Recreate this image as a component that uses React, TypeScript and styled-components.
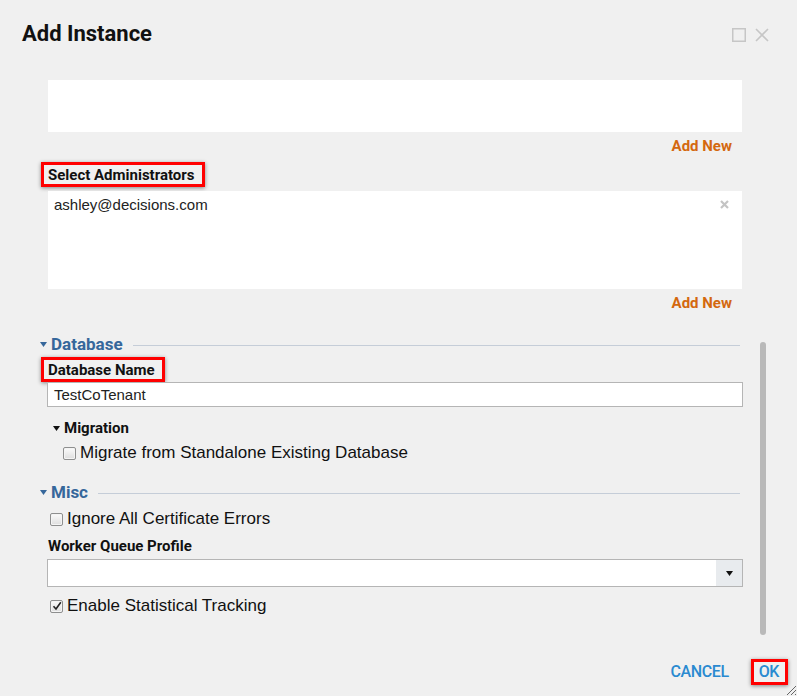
import React from "react";
import styled, { createGlobalStyle, css } from "styled-components";

const GlobalStyle = createGlobalStyle`
  html, body {
    margin: 0;
    padding: 0;
    background: #f0f0f0;
  }
  * { box-sizing: border-box; }
`;

const Dialog = styled.div`
  position: relative;
  width: 797px;
  height: 696px;
  background: #f0f0f0;
  display: flex;
  flex-direction: column;
  overflow: hidden;
`;

const Header = styled.div`
  height: 80px;
  flex: none;
  display: flex;
  align-items: flex-start;
  padding: 21px 28px 0 22px;
`;

const Title = styled.h1`
  margin: 0;
  font-family: Roboto, "Liberation Sans", sans-serif;
  font-weight: 700;
  font-size: 22px;
  line-height: 26px;
  color: #111;
`;

const WindowIcons = styled.div`
  margin-left: auto;
  margin-top: 7px;
  display: flex;
  gap: 9px;
`;

const Main = styled.div`
  flex: 1;
  display: flex;
  padding-left: 40px;
  min-height: 0;
`;

const Form = styled.div`
  width: 703px;
  display: flex;
  flex-direction: column;
`;

const Track = styled.div`
  width: 6px;
  margin-left: 17px;
  padding-top: 262px;
`;

const Thumb = styled.div`
  width: 6px;
  height: 293px;
  border-radius: 3px;
  background: #b9b9b9;
`;

const WhiteBox = styled.div<{ $h: number; $mt?: number }>`
  position: relative;
  margin-left: 8px;
  margin-top: ${(p) => p.$mt ?? 0}px;
  width: 694px;
  height: ${(p) => p.$h}px;
  background: #fff;
  padding: 5px 6px;
  font-family: "Liberation Sans", Arial, sans-serif;
  font-size: 15px;
  line-height: 17px;
  color: #222;
`;

const RemoveX = styled.span`
  position: absolute;
  right: 13px;
  top: 9px;
  display: flex;
`;

const AddNew = styled.div<{ $mt: number }>`
  margin-top: ${(p) => p.$mt}px;
  padding-right: 11px;
  text-align: right;
  font-family: Roboto, "Liberation Sans", sans-serif;
  font-weight: 700;
  font-size: 15px;
  line-height: 20px;
  color: #d4680f;
`;

const Label = styled.div<{ $mt: number; $highlight?: boolean }>`
  align-self: flex-start;
  margin-top: ${(p) => p.$mt}px;
  font-family: Roboto, "Liberation Sans", sans-serif;
  font-weight: 700;
  font-size: 15px;
  line-height: 19px;
  color: #111;
  margin-left: 8px;
  ${(p) =>
    p.$highlight &&
    css`
      margin-left: 1px;
      border: 3px solid #f00;
      padding: 2px 7px 0 4px;
      line-height: 17px;
      box-shadow: 0 1px 4px rgba(0, 0, 0, 0.45);
    `}
`;

const SectionHeader = styled.div<{ $mt: number }>`
  margin-top: ${(p) => p.$mt}px;
  display: flex;
  align-items: center;
  padding-right: 3px;
  font-family: Roboto, "Liberation Sans", sans-serif;
  font-weight: 700;
  font-size: 17px;
  line-height: 20px;
  color: #36679b;
`;

const SectionTitle = styled.span`
  margin-left: 4px;
  margin-right: 10px;
`;

const Rule = styled.span`
  flex: 1;
  height: 1px;
  background: #c5cdd8;
  margin-top: 2px;
`;

const TextInput = styled.div`
  margin-left: 7px;
  width: 696px;
  height: 25px;
  border: 1px solid #b5b5b5;
  background: #fff;
  padding: 1px 6px 0;
  font-family: "Liberation Sans", Arial, sans-serif;
  font-size: 15px;
  line-height: 22px;
  color: #222;
`;

const SubHeader = styled.div`
  margin-top: 12px;
  margin-left: 13px;
  display: flex;
  align-items: center;
  gap: 4px;
  font-family: Roboto, "Liberation Sans", sans-serif;
  font-weight: 700;
  font-size: 15px;
  line-height: 18px;
  color: #111;
`;

const CheckRow = styled.div<{ $mt: number; $ml: number }>`
  margin-top: ${(p) => p.$mt}px;
  margin-left: ${(p) => p.$ml}px;
  display: flex;
  align-items: center;
  gap: 4px;
  font-family: "Liberation Sans", Arial, sans-serif;
  font-size: 17px;
  line-height: 18px;
  color: #111;
`;

const Box = styled.span`
  width: 13px;
  height: 13px;
  flex: none;
  border: 1px solid #8e8f8f;
  border-radius: 2px;
  background: linear-gradient(#fbfbfb, #dedede);
  box-shadow: inset 0 0 0 1px #f4f4f4;
  display: flex;
  align-items: center;
  justify-content: center;
`;

const Select = styled.div`
  margin-top: 3px;
  margin-left: 7px;
  width: 696px;
  height: 28px;
  border: 1px solid #b5b5b5;
  background: #fff;
  display: flex;
  justify-content: flex-end;
`;

const SelectArrow = styled.span`
  width: 26px;
  background: #e8ebee;
  display: flex;
  align-items: center;
  justify-content: center;
`;

const Footer = styled.div`
  height: 56px;
  flex: none;
  display: flex;
  align-items: center;
  justify-content: flex-end;
  gap: 22px;
  padding: 8px 9px 0 0;
`;

const FooterButton = styled.button<{ $highlight?: boolean }>`
  border: none;
  background: none;
  padding: 0;
  font-family: Roboto, "Liberation Sans", sans-serif;
  font-weight: 500;
  font-size: 16px;
  letter-spacing: -0.4px;
  line-height: 20px;
  color: #2a8ad0;
  cursor: pointer;
  ${(p) =>
    p.$highlight &&
    css`
      border: 3px solid #f00;
      padding: 0 6px 0 5px;
      box-shadow: 0 1px 4px rgba(0, 0, 0, 0.45);
    `}
`;

const Grip = styled.span`
  position: absolute;
  right: 0;
  bottom: 0;
  display: flex;
`;

const Caret = ({ color = "#36679b", w = 7, h = 5 }: { color?: string; w?: number; h?: number }) => (
  <svg width={w} height={h} viewBox="0 0 7 5">
    <polygon points="0,0 7,0 3.5,5" fill={color} />
  </svg>
);

const Checkbox = ({ checked }: { checked?: boolean }) => (
  <Box>
    {checked && (
      <svg width="10" height="10" viewBox="0 0 10 10">
        <path d="M1.5 5.2 L4 8 L8.8 1.2" fill="none" stroke="#222" strokeWidth="1.6" />
      </svg>
    )}
  </Box>
);

export default function App() {
  return (
    <>
      <GlobalStyle />
      <Dialog>
        <Header>
          <Title>Add Instance</Title>
          <WindowIcons>
            <svg width="14" height="14" viewBox="0 0 14 14">
              <rect x="0.75" y="0.75" width="12.5" height="12.5" fill="none" stroke="#c6c6c6" strokeWidth="1.5" />
            </svg>
            <svg width="14" height="14" viewBox="0 0 14 14">
              <path d="M1 1 L13 13 M13 1 L1 13" stroke="#c6c6c6" strokeWidth="1.6" />
            </svg>
          </WindowIcons>
        </Header>

        <Main>
          <Form>
            <WhiteBox $h={52} />
            <AddNew $mt={4}>Add New</AddNew>

            <Label $mt={6} $highlight>Select Administrators</Label>
            <WhiteBox $h={98} $mt={4}>
              ashley@decisions.com
              <RemoveX>
                <svg width="9" height="9" viewBox="0 0 9 9">
                  <path d="M1 1 L8 8 M8 1 L1 8" stroke="#c4c4c4" strokeWidth="2.2" />
                </svg>
              </RemoveX>
            </WhiteBox>
            <AddNew $mt={4}>Add New</AddNew>

            <SectionHeader $mt={21}>
              <Caret />
              <SectionTitle>Database</SectionTitle>
              <Rule />
            </SectionHeader>
            <Label $mt={3} $highlight>Database Name</Label>
            <TextInput>TestCoTenant</TextInput>

            <SubHeader>
              <Caret color="#111" />
              Migration
            </SubHeader>
            <CheckRow $mt={7} $ml={23}>
              <Checkbox />
              Migrate from Standalone Existing Database
            </CheckRow>

            <SectionHeader $mt={20}>
              <Caret />
              <SectionTitle>Misc</SectionTitle>
              <Rule />
            </SectionHeader>
            <CheckRow $mt={8} $ml={10}>
              <Checkbox />
              Ignore All Certificate Errors
            </CheckRow>
            <Label $mt={9}>Worker Queue Profile</Label>
            <Select>
              <SelectArrow>
                <Caret color="#111" w={9} h={5} />
              </SelectArrow>
            </Select>
            <CheckRow $mt={10} $ml={10}>
              <Checkbox checked />
              Enable Statistical Tracking
            </CheckRow>
          </Form>
          <Track>
            <Thumb />
          </Track>
        </Main>

        <Footer>
          <FooterButton>CANCEL</FooterButton>
          <FooterButton $highlight>OK</FooterButton>
        </Footer>

        <Grip>
          <svg width="13" height="13" viewBox="0 0 13 13">
            <path d="M12 3 L3 12 M12 7 L7 12 M12 11 L11 12" stroke="#666" strokeWidth="1" />
          </svg>
        </Grip>
      </Dialog>
    </>
  );
}
